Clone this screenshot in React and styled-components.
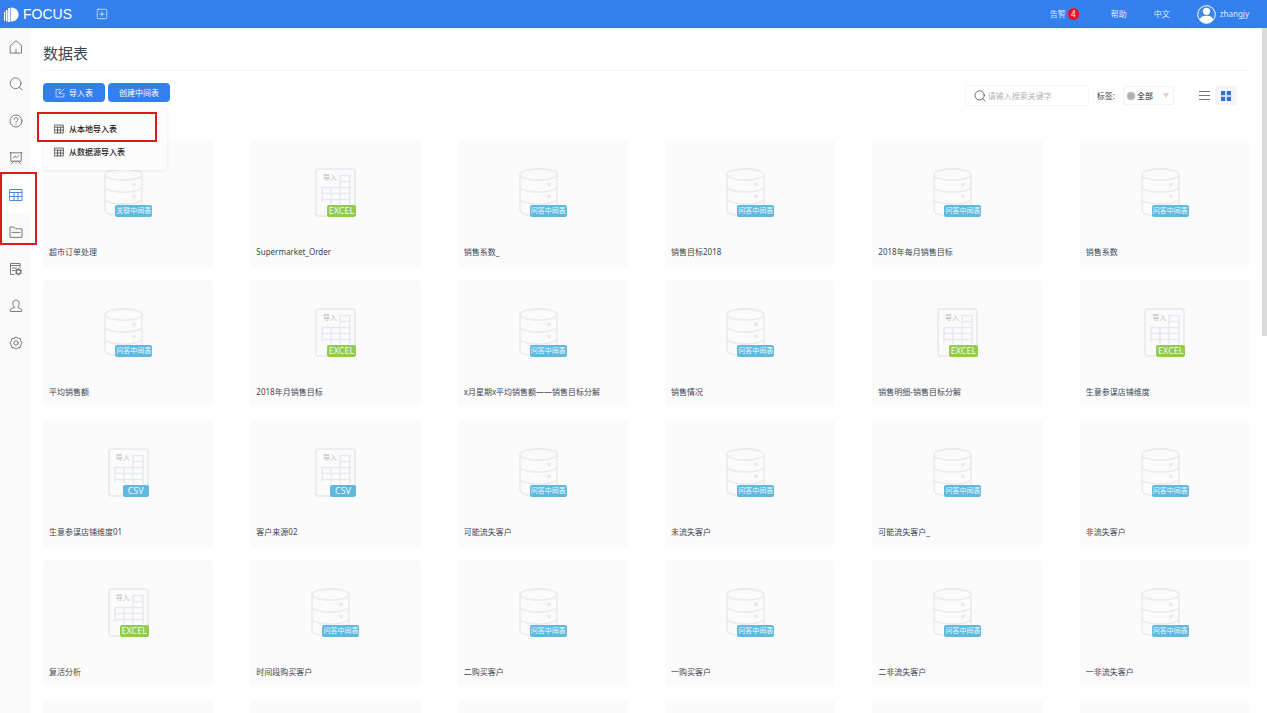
import React, { useState } from "react";
import styled, { createGlobalStyle } from "styled-components";

const GlobalStyle = createGlobalStyle`
  * {
    box-sizing: border-box;
  }

  body {
    margin: 0;
    background-color: white;
    color: #3c4653;
    font-family: "Noto Sans", "Noto Sans CJK SC", sans-serif;
    font-size: 8px;
    line-height: 12px;
  }

  button,
  input,
  select {
    font: inherit;
    color: inherit;
    border: none;
    outline: none;
    padding: 0;
    margin: 0;
    background: none;
  }

  svg {
    display: block;
    flex: none;
  }
`;

const Page = styled.div`
  display: flex;
  flex-direction: column;
  height: 100vh;
  overflow: hidden;
`;

const Header = styled.header`
  display: flex;
  align-items: center;
  justify-content: space-between;
  flex: none;
  height: 28px;
  padding: 0 18px 0 4px;
  background-color: #327fed;
  color: #dfebfd;
`;

const HeaderSide = styled.div`
  display: flex;
  align-items: center;
  gap: 24px;
`;

const Brand = styled.a`
  display: flex;
  align-items: center;
  gap: 4px;
  color: white;
  font-family: "Liberation Sans", sans-serif;
  font-size: 14px;
  line-height: 20px;
  text-decoration: none;
`;

const HeaderMenu = styled.nav`
  display: flex;
  align-items: center;
  gap: 27px;
`;

const HeaderLink = styled.a`
  display: flex;
  align-items: center;
  gap: ${(props) => props.$gap || 4}px;
  color: inherit;
  text-decoration: none;
`;

const Count = styled.span`
  width: 11px;
  height: 12px;
  margin-right: 5px;
  border-radius: 6px;
  background-color: #ee1122;
  color: white;
  text-align: center;
`;

const IconButton = styled.button`
  display: flex;
  align-items: center;
  justify-content: center;
  cursor: pointer;
`;

const Body = styled.div`
  display: flex;
  flex: 1;
  min-height: 0;
`;

const Sidebar = styled.nav`
  flex: none;
  width: 31px;
  background-color: #fafafa;
  color: #6d6d6d;
`;

const NavItem = styled.a`
  display: flex;
  align-items: center;
  justify-content: center;
  height: 37px;
  color: ${(props) => (props.$active ? "#3f7fd0" : "inherit")};
  background-color: ${(props) => (props.$active ? "white" : "transparent")};
`;

const NavGroup = styled.div`
  position: relative;
`;

const Marker = styled.div`
  position: absolute;
  top: ${(props) => props.$top}px;
  left: ${(props) => props.$left}px;
  width: ${(props) => props.$width}px;
  height: ${(props) => props.$height}px;
  border: 2px solid #dc1a20;
  pointer-events: none;
  z-index: 3;
`;

const Content = styled.main`
  flex: 1;
  min-width: 0;
  padding: 0 12px;
  overflow: hidden;
`;

const Title = styled.h1`
  margin: 0;
  padding: 15px 0 7px;
  border-bottom: 1px solid #f6f6f6;
  font-size: 15px;
  font-weight: 400;
  line-height: 20px;
`;

const Toolbar = styled.div`
  display: flex;
  align-items: flex-start;
  justify-content: space-between;
  height: 69px;
  padding-top: 12px;
`;

const Actions = styled.div`
  position: relative;
  display: flex;
  gap: 3px;
`;

const ActionButton = styled.button`
  display: flex;
  align-items: center;
  justify-content: center;
  gap: 4px;
  width: 62px;
  height: 19px;
  border-radius: 4px;
  background-color: #327fed;
  color: white;
  cursor: pointer;
`;

const Menu = styled.div`
  position: absolute;
  top: 23px;
  left: 0;
  width: 124px;
  padding: 11px 0 7px;
  background-color: #fcfcfc;
  box-shadow: 0 1px 3px rgba(0, 0, 0, 0.08);
  z-index: 2;
`;

const MenuItem = styled.button`
  display: flex;
  align-items: center;
  gap: 5px;
  width: 100%;
  height: 23px;
  padding-left: 11px;
  color: #1a1a1a;
  font-weight: 500;
  cursor: pointer;
`;

const Filters = styled.div`
  display: flex;
  align-items: center;
  padding: 2px 13px 0 0;
`;

const SearchBox = styled.label`
  display: flex;
  align-items: center;
  gap: 2px;
  width: 124px;
  height: 21px;
  padding-left: 8px;
  border: 1px solid #f7f7f7;
  color: #444;
`;

const SearchInput = styled.input`
  flex: 1;
  min-width: 0;
  color: #333;

  &::placeholder {
    color: #b4b4b4;
    opacity: 1;
  }
`;

const TagLabel = styled.label`
  margin: 0 8px;
`;

const TagBox = styled.div`
  display: flex;
  align-items: center;
  width: 51px;
  height: 19px;
  padding: 0 4px 0 3px;
  border: 1px solid #f3f3f3;
  border-radius: 2px;
`;

const Dot = styled.span`
  flex: none;
  width: 8px;
  height: 8px;
  margin-right: 2px;
  border-radius: 50%;
  background-color: #b3b3b3;
`;

const TagSelect = styled.select`
  flex: 1;
  min-width: 0;
  appearance: none;
  color: #222;
`;

const ViewButton = styled(IconButton)`
  width: 22px;
  height: 19px;
  background-color: ${(props) => (props.$active ? "#f3f5f8" : "transparent")};
  color: ${(props) => (props.$active ? "#2f6fd8" : "#777")};
`;

const Views = styled.div`
  display: flex;
  margin-left: 19px;
`;

const Grid = styled.div`
  display: grid;
  grid-template-columns: repeat(6, 1fr);
  gap: 13px 37px;
`;

const Card = styled.article`
  display: flex;
  flex-direction: column;
  align-items: center;
  min-width: 0;
  height: 127px;
  padding: 28px 6px 0;
  border-radius: 4px;
  background-color: #fbfbfb;
`;

const Picture = styled.div`
  position: relative;
  width: ${(props) => (props.$file ? 41 : 48)}px;
  height: 49px;
`;

const Badge = styled.span`
  position: absolute;
  right: 0;
  bottom: 0;
  width: ${(props) => props.$width}px;
  height: 12px;
  border-radius: 2px;
  background-color: ${(props) => props.$color};
  color: #eefaff;
  font-size: ${(props) => props.$size}px;
  line-height: 12px;
  text-align: center;
  white-space: nowrap;
`;

const FileMark = styled.span`
  position: absolute;
  top: 4px;
  left: 8px;
  color: #b9bcc1;
  font-size: 7px;
`;

const CardName = styled.h2`
  width: 100%;
  margin: 29px 0 0;
  overflow: hidden;
  font-size: 8px;
  font-weight: 400;
  line-height: 12px;
  text-overflow: ellipsis;
  white-space: nowrap;
`;

const ScrollTrack = styled.div`
  flex: none;
  width: 5px;
`;

const ScrollThumb = styled.div`
  height: 45%;
  background-color: #dadada;
`;

const Icon = ({ size = 14, children }) => (
  <svg
    width={size}
    height={size}
    viewBox="0 0 14 14"
    fill="none"
    stroke="currentColor"
    strokeWidth="0.9"
    strokeLinecap="round"
    strokeLinejoin="round"
    aria-hidden="true"
  >
    {children}
  </svg>
);

const HomeIcon = () => (
  <Icon>
    <path d="M1.500 5.500 7 .8l5.500 4.700V13h-11zM7 9.300V13" />
  </Icon>
);

const SearchIcon = ({ size }) => (
  <Icon size={size}>
    <circle cx="6.600" cy="6.300" r="5.400" />
    <path d="m10.600 10.400 2.400 2.500" />
  </Icon>
);

const HelpIcon = () => (
  <Icon>
    <circle cx="7" cy="7" r="6" />
    <path d="M5 5.500C5 4.200 5.900 3.500 7 3.500s2 .8 2 1.800c0 1.500-2 1.500-2 3M7 10.200v.3" />
  </Icon>
);

const BoardIcon = () => (
  <Icon>
    <path d="M1 1.800h12M1.800 1.800v8.400h10.400V1.800M4.200 7l1.800-2 1.800 1.500 2-2M4.500 10.200l-2 2.600M9.500 10.200l2 2.600M7 10.200v1.600" />
  </Icon>
);

const TableIcon = ({ size }) => (
  <Icon size={size}>
    <path d="M1 1.500h12v11H1zM1 4.500h12M1 8.500h12M5 4.500v8M9 4.500v8" />
  </Icon>
);

const FolderIcon = () => (
  <Icon>
    <path d="M1 12V2h4l1.500 1.800H13V12zM3 7.400h8" />
  </Icon>
);

const LogIcon = () => (
  <Icon>
    <path d="M5 12.500H1.500v-11H11v4M1.500 3.500H11M3.500 6h4M3.500 8.500h2" />
    <circle cx="9.500" cy="9.800" r="2.300" strokeWidth="1.400" />
    <path d="M9.500 6.500v.5M9.500 12.600v.5M6.700 8.200l.4.200M11.900 11.200l.4.200M6.700 11.400l.4-.2M11.900 8.400l.4-.2" />
  </Icon>
);

const UserIcon = () => (
  <Icon>
    <path d="M5.500 8.200C4.200 7.200 3.900 5.800 3.900 4.300 3.900 2.300 5.200 1 7 1s3.100 1.300 3.100 3.300c0 1.500-.3 2.900-1.600 3.900 0 1 4.500.8 4.500 3.600 0 .4-.3.700-.7.700H1.700c-.4 0-.7-.3-.7-.7 0-2.800 4.500-2.600 4.500-3.600z" />
  </Icon>
);

const GearIcon = () => (
  <Icon>
    <path d="M5 2.200Q7-.4 9 2.200Q12.200 1.800 11.800 5Q14.400 7 11.800 9Q12.200 12.200 9 11.800Q7 14.400 5 11.800Q1.800 12.200 2.200 9Q-.4 7 2.200 5Q1.800 1.800 5 2.200z" />
    <circle cx="7" cy="7" r="2.200" />
  </Icon>
);

const ImportIcon = () => (
  <Icon size={10}>
    <path d="M8 2H1.500v10.500h11V7.500M12.500 1.500 6 8M6 4v4h4" />
  </Icon>
);

const PlusIcon = () => (
  <Icon size={12}>
    <rect x="1.500" y="1.500" width="11" height="11" rx="1" />
    <path d="M7 4.500v5M4.500 7h5" />
  </Icon>
);

const Logo = () => (
  <svg width="15" height="15" viewBox="0 0 15 15" fill="white" aria-hidden="true">
    <path d="M0 5h1v8.500H0zM1.800 3h1.700v11.500H1.800zM4.100 1H6v14H4.100zM6.600.4c5.200 0 8 3.100 8 7.100s-2.800 7.100-8 7.100z" />
  </svg>
);

const Avatar = () => (
  <svg width="19" height="19" viewBox="0 0 19 19" aria-hidden="true">
    <circle cx="9.500" cy="9.500" r="8.800" fill="#3f86ea" stroke="white" />
    <circle cx="9.500" cy="6.300" r="3.600" fill="white" />
    <path d="M2.800 14.400C3.600 11.900 6 10.800 9.500 10.800s5.900 1.100 6.700 3.600c-3.200 5-10.200 5-13.400 0z" fill="white" />
  </svg>
);

const ArrowIcon = () => (
  <svg width="6" height="5" viewBox="0 0 6 5" fill="#d3d3d3" aria-hidden="true">
    <path d="M0 0h6L3 5z" />
  </svg>
);

const GridIcon = () => (
  <svg width="10" height="10" viewBox="0 0 10 10" fill="currentColor" aria-hidden="true">
    <path d="M0 0h4.200v4.200H0zM5.800 0H10v4.200H5.800zM0 5.800h4.200V10H0zM5.800 5.800H10V10H5.800z" />
  </svg>
);

const ListIcon = () => (
  <svg width="11" height="10" viewBox="0 0 11 10" stroke="currentColor" aria-hidden="true">
    <path d="M0 .5h11M0 4.500h11M0 8.500h11" />
  </svg>
);

const DatabaseDrawing = () => (
  <svg width="40" height="49" viewBox="0 0 40 49" fill="none" stroke="#e9ebef" strokeWidth="1.600" aria-hidden="true">
    <ellipse cx="19.500" cy="6.500" rx="18.500" ry="5.600" />
    <path d="M1 6.500v36c0 3 8 5.600 18.500 5.600S38 45.500 38 42.500v-36M1 18.500c0 3 8 5.600 18.500 5.600S38 21.500 38 18.500M1 30.500c0 3 8 5.600 18.500 5.600S38 33.500 38 30.500" />
    <circle cx="30" cy="16.500" r="1.200" fill="#dfe1e6" />
    <circle cx="30" cy="28.500" r="1.200" fill="#dfe1e6" />
  </svg>
);

const FileDrawing = () => (
  <svg width="41" height="49" viewBox="0 0 41 49" fill="none" stroke="#e6e9ef" strokeWidth="1.500" aria-hidden="true">
    <rect x="1" y="1" width="39" height="47" rx="2.500" />
    <path d="M25 33V7.500h10V36M25 13.500h10M7 34V19.500h28M7 25.500h28M7 31.500h28M16 19.500V36M25 19.500V36" />
  </svg>
);

const kinds = {
  qa: { text: "问答中间表", color: "#5fb9df", width: 37, size: 7 },
  link: { text: "关联中间表", color: "#5fb9df", width: 37, size: 7 },
  excel: { text: "EXCEL", color: "#92cb4d", width: 29, size: 9, file: true },
  csv: { text: "CSV", color: "#5fb9df", width: 26, size: 9, file: true },
};

const tables = [
  ["超市订单处理", "link"],
  ["Supermarket_Order", "excel"],
  ["销售系数_", "qa"],
  ["销售目标2018", "qa"],
  ["2018年每月销售目标", "qa"],
  ["销售系数", "qa"],
  ["平均销售额", "qa"],
  ["2018年月销售目标", "excel"],
  ["x月星期x平均销售额——销售目标分解", "qa"],
  ["销售情况", "qa"],
  ["销售明细-销售目标分解", "excel"],
  ["生意参谋店铺维度", "excel"],
  ["生意参谋店铺维度01", "csv"],
  ["客户来源02", "csv"],
  ["可能流失客户", "qa"],
  ["未流失客户", "qa"],
  ["可能流失客户_", "qa"],
  ["非流失客户", "qa"],
  ["复活分析", "excel"],
  ["时间段购买客户", "qa"],
  ["二购买客户", "qa"],
  ["一购买客户", "qa"],
  ["二非流失客户", "qa"],
  ["一非流失客户", "qa"],
];

function TableCard({ name, kind }) {
  const { text, color, width, size, file } = kinds[kind];

  return (
    <Card>
      <Picture $file={file}>
        {file ? <FileDrawing /> : <DatabaseDrawing />}
        {file && <FileMark>导入</FileMark>}
        <Badge $color={color} $width={width} $size={size}>
          {text}
        </Badge>
      </Picture>
      <CardName>{name}</CardName>
    </Card>
  );
}

function App() {
  const [searchField, setSearchField] = useState("");
  const [menuOpen, setMenuOpen] = useState(true);
  const [view, setView] = useState("grid");

  const filteredTables = tables.filter(([name]) =>
    name.toLowerCase().includes(searchField.toLowerCase())
  );

  return (
    <Page lang="zh-CN">
      <GlobalStyle />
      <Header>
        <HeaderSide>
          <Brand href="#">
            <Logo />
            FOCUS
          </Brand>
          <IconButton aria-label="新建">
            <PlusIcon />
          </IconButton>
        </HeaderSide>
        <HeaderMenu>
          <HeaderLink href="#alarm" $gap={2}>
            告警
            <Count>4</Count>
          </HeaderLink>
          <HeaderLink href="#help">帮助</HeaderLink>
          <HeaderLink href="#language">中文</HeaderLink>
          <HeaderLink href="#account">
            <Avatar />
            zhangjy
          </HeaderLink>
        </HeaderMenu>
      </Header>

      <Body>
        <Sidebar>
          <NavItem href="#home" aria-label="首页">
            <HomeIcon />
          </NavItem>
          <NavItem href="#search" aria-label="搜索">
            <SearchIcon />
          </NavItem>
          <NavItem href="#answers" aria-label="问答">
            <HelpIcon />
          </NavItem>
          <NavItem href="#boards" aria-label="看板">
            <BoardIcon />
          </NavItem>
          <NavGroup>
            <NavItem href="#tables" aria-label="数据表" $active>
              <TableIcon />
            </NavItem>
            <NavItem href="#resources" aria-label="资源">
              <FolderIcon />
            </NavItem>
            <Marker $top={-4} $left={0} $width={37} $height={73} />
          </NavGroup>
          <NavItem href="#logs" aria-label="日志">
            <LogIcon />
          </NavItem>
          <NavItem href="#users" aria-label="用户">
            <UserIcon />
          </NavItem>
          <NavItem href="#settings" aria-label="设置">
            <GearIcon />
          </NavItem>
        </Sidebar>

        <Content>
          <Title>数据表</Title>
          <Toolbar>
            <Actions>
              <ActionButton onClick={() => setMenuOpen(!menuOpen)}>
                <ImportIcon />
                导入表
              </ActionButton>
              <ActionButton>创建中间表</ActionButton>
              {menuOpen && (
                <Menu>
                  <MenuItem>
                    <TableIcon size={10} />
                    从本地导入表
                  </MenuItem>
                  <MenuItem>
                    <TableIcon size={10} />
                    从数据源导入表
                  </MenuItem>
                  <Marker $top={6} $left={-6} $width={120} $height={30} />
                </Menu>
              )}
            </Actions>

            <Filters>
              <SearchBox>
                <SearchIcon size={12} />
                <SearchInput
                  type="text"
                  aria-label="搜索"
                  placeholder="请输入搜索关键字"
                  value={searchField}
                  onChange={(e) => setSearchField(e.target.value)}
                />
              </SearchBox>
              <TagLabel htmlFor="tag">标签:</TagLabel>
              <TagBox>
                <Dot />
                <TagSelect id="tag">
                  <option>全部</option>
                </TagSelect>
                <ArrowIcon />
              </TagBox>
              <Views>
                <ViewButton
                  aria-label="列表"
                  $active={view === "list"}
                  onClick={() => setView("list")}
                >
                  <ListIcon />
                </ViewButton>
                <ViewButton
                  aria-label="卡片"
                  $active={view === "grid"}
                  onClick={() => setView("grid")}
                >
                  <GridIcon />
                </ViewButton>
              </Views>
            </Filters>
          </Toolbar>

          <Grid>
            {filteredTables.map(([name, kind]) => (
              <TableCard key={name} name={name} kind={kind} />
            ))}
            {/* next page, still loading */}
            {!searchField &&
              [1, 2, 3, 4, 5, 6].map((slot) => <Card key={slot} />)}
          </Grid>
        </Content>

        <ScrollTrack>
          <ScrollThumb />
        </ScrollTrack>
      </Body>
    </Page>
  );
}

export default App;
